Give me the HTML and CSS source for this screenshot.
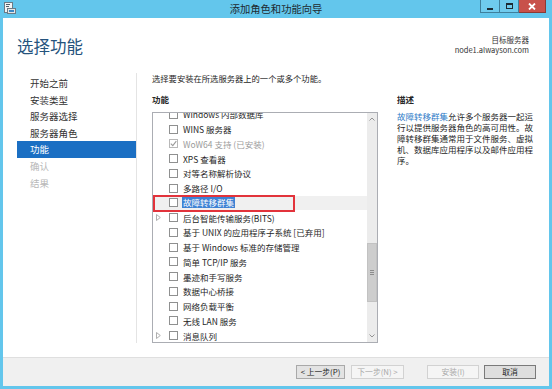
FILE: index.html
```html
<!DOCTYPE html>
<html lang="zh-CN">
<head>
<meta charset="utf-8">
<title>添加角色和功能向导</title>
<link rel="stylesheet" href="styles.css">
</head>
<body>
<div class="window">
  <div class="titlebar">
    <div class="tb-left">
      <svg class="app-icon" width="12" height="12" viewBox="0 0 12 12">
        <rect x="0.5" y="0.5" width="8" height="10" fill="#f4f4f4" stroke="#6b7b86"/>
        <rect x="2" y="2" width="4" height="1" fill="#51606b"/>
        <rect x="2" y="4" width="3" height="1" fill="#51606b"/>
        <rect x="3.5" y="6.5" width="8" height="5" fill="#e2e6e8" stroke="#6b7b86"/>
        <rect x="5" y="8" width="5" height="2" fill="#3b87c4"/>
      </svg>
    </div>
    <div class="title">添加角色和功能向导</div>
    <div class="caption-buttons">
      <div class="cbtn min"><span class="glyph-min"></span></div>
      <div class="cbtn max"><span class="glyph-max"></span></div>
      <div class="cbtn close">
        <svg width="8" height="7" viewBox="0 0 8 7"><path d="M1 0.5 L7 6.5 M7 0.5 L1 6.5" stroke="#fff" stroke-width="1.8"/></svg>
      </div>
    </div>
  </div>

  <div class="client">
    <header class="page-header">
      <h1>选择功能</h1>
      <div class="server">
        <div>目标服务器</div>
        <div>node1.alwayson.com</div>
      </div>
    </header>

    <div class="body">
      <nav class="steps">
        <div class="step">开始之前</div>
        <div class="step">安装类型</div>
        <div class="step">服务器选择</div>
        <div class="step">服务器角色</div>
        <div class="step active">功能</div>
        <div class="step disabled">确认</div>
        <div class="step disabled">结果</div>
      </nav>

      <main class="content">
        <p class="intro">选择要安装在所选服务器上的一个或多个功能。</p>
        <div class="columns">
          <section class="features">
            <div class="label">功能</div>
            <div class="listbox">
              <div class="list-viewport">
                <ul class="items">
                  <li class="item"><span class="exp"></span><span class="check"></span><span class="text">Windows 内部数据库</span></li>
                  <li class="item"><span class="exp"></span><span class="check"></span><span class="text">WINS 服务器</span></li>
                  <li class="item installed"><span class="exp"></span><span class="check checked"><svg width="7" height="7" viewBox="0 0 7 7"><path d="M0.8 3.6 L2.8 5.6 L6.3 1.2" fill="none" stroke="#9a9a9a" stroke-width="1.1"/></svg></span><span class="text">WoW64 支持 (已安装)</span></li>
                  <li class="item"><span class="exp"></span><span class="check"></span><span class="text">XPS 查看器</span></li>
                  <li class="item"><span class="exp"></span><span class="check"></span><span class="text">对等名称解析协议</span></li>
                  <li class="item"><span class="exp"></span><span class="check"></span><span class="text">多路径 I/O</span></li>
                  <li class="item selected"><span class="exp"></span><span class="check"></span><span class="text">故障转移群集</span><span class="annotation"></span></li>
                  <li class="item"><span class="exp"><svg width="5" height="7" viewBox="0 0 5 7"><path d="M0.5 0.5 L4.3 3.5 L0.5 6.5 Z" fill="none" stroke="#a6a6a6" stroke-width="0.9"/></svg></span><span class="check"></span><span class="text">后台智能传输服务(BITS)</span></li>
                  <li class="item"><span class="exp"></span><span class="check"></span><span class="text">基于 UNIX 的应用程序子系统 [已弃用]</span></li>
                  <li class="item"><span class="exp"></span><span class="check"></span><span class="text">基于 Windows 标准的存储管理</span></li>
                  <li class="item"><span class="exp"></span><span class="check"></span><span class="text">简单 TCP/IP 服务</span></li>
                  <li class="item"><span class="exp"></span><span class="check"></span><span class="text">墨迹和手写服务</span></li>
                  <li class="item"><span class="exp"></span><span class="check"></span><span class="text">数据中心桥接</span></li>
                  <li class="item"><span class="exp"></span><span class="check"></span><span class="text">网络负载平衡</span></li>
                  <li class="item"><span class="exp"></span><span class="check"></span><span class="text">无线 LAN 服务</span></li>
                  <li class="item"><span class="exp"><svg width="5" height="7" viewBox="0 0 5 7"><path d="M0.5 0.5 L4.3 3.5 L0.5 6.5 Z" fill="none" stroke="#a6a6a6" stroke-width="0.9"/></svg></span><span class="check"></span><span class="text">消息队列</span></li>
                </ul>
              </div>
              <div class="scrollbar">
                <div class="sb-arrow"><svg width="6" height="4" viewBox="0 0 6 4"><path d="M0.5 3.5 L3 1 L5.5 3.5" fill="none" stroke="#8a8a8a" stroke-width="0.9"/></svg></div>
                <div class="sb-track">
                  <div class="sb-thumb"><span class="grip"></span></div>
                </div>
                <div class="sb-arrow"><svg width="6" height="4" viewBox="0 0 6 4"><path d="M0.5 0.5 L3 3 L5.5 0.5" fill="none" stroke="#8a8a8a" stroke-width="0.9"/></svg></div>
              </div>
            </div>
          </section>

          <section class="desc">
            <div class="label">描述</div>
            <p class="desc-text"><span class="link">故障转移群集</span>允许多个服务器一起运<br>行以提供服务器角色的高可用性。故<br>障转移群集通常用于文件服务、虚拟<br>机、数据库应用程序以及邮件应用程<br>序。</p>
          </section>
        </div>
      </main>
    </div>

    <footer class="footer">
      <button class="btn prev">&lt; 上一步(P)</button>
      <button class="btn next" disabled>下一步(N) &gt;</button>
      <button class="btn install" disabled>安装(I)</button>
      <button class="btn cancel">取消</button>
    </footer>
  </div>
</div>
</body>
</html>
```

FILE: styles.css
```css
* { box-sizing: border-box; }

html, body {
  margin: 0;
  padding: 0;
  background: #63c6ec;
}

body {
  font-family: "Noto Sans CJK SC", "Noto Sans", sans-serif;
  color: #222;
  text-spacing-trim: space-all;
}

.window {
  width: 552px;
  height: 389px;
  background: #63c6ec;
  padding: 0 3px 3px 3px;
  display: flex;
  flex-direction: column;
}

/* ---------- title bar ---------- */
.titlebar {
  height: 18px;
  display: grid;
  grid-template-columns: 1fr auto 1fr;
  align-items: start;
}

.tb-left {
  padding: 2px 0 0 1px;
  display: flex;
}

.title {
  font-size: 10.3px;
  line-height: 17px;
  color: #1e2a30;
}

.caption-buttons {
  display: flex;
  justify-content: flex-end;
  margin-right: 3px;
}

.cbtn {
  height: 13px;
  display: flex;
  align-items: center;
  justify-content: center;
  border: 1px solid #3f7f9c;
  border-top: none;
}

.cbtn.min { width: 20px; background: #6fcbee; }
.cbtn.max { width: 19px; background: #6fcbee; border-left: none; }
.cbtn.close { width: 27px; background: #c8514a; border-color: #8a3a34; border-left: none; }

.glyph-min {
  width: 6px;
  height: 2px;
  background: #1d2a33;
  margin-top: 5px;
}

.glyph-max {
  width: 7px;
  height: 6px;
  border: 1px solid #1d2a33;
  border-top-width: 2px;
}

/* ---------- client ---------- */
.client {
  flex: 1;
  background: #fff;
  display: flex;
  flex-direction: column;
}

.page-header {
  height: 55px;
  display: flex;
  justify-content: space-between;
  padding: 0 20px 0 14px;
}

.page-header h1 {
  margin: 0;
  padding-top: 18px;
  font-size: 16.5px;
  line-height: 21px;
  font-weight: normal;
  color: #25537d;
}

.server {
  padding-top: 17px;
  text-align: right;
  font-size: 7.5px;
  line-height: 10px;
  color: #333;
}

.body {
  flex: 1;
  display: flex;
  padding-bottom: 14px;
}

/* ---------- steps nav ---------- */
.steps {
  width: 134px;
  padding: 2px 0 0 14px;
  border-right: 1px solid #e4e4e4;
}

.step {
  height: 16.6px;
  line-height: 16.6px;
  padding-left: 13px;
  font-size: 9.5px;
  color: #333;
}

.step.active {
  background: #1b6fc3;
  color: #fff;
}

.step.disabled {
  color: #b8b8b8;
}

/* ---------- main content ---------- */
.content {
  padding-left: 15px;
}

.intro {
  margin: 0;
  font-size: 8.3px;
  line-height: 11px;
  color: #262626;
}

.columns {
  display: flex;
  gap: 19px;
  margin-top: 10px;
}

.label {
  font-size: 8.5px;
  line-height: 11px;
  font-weight: bold;
  color: #262626;
}

.listbox {
  margin-top: 7px;
  width: 226px;
  height: 231px;
  border: 1px solid #abadb3;
  display: flex;
}

.list-viewport {
  flex: 1;
  overflow: hidden;
}

.items {
  margin: -6px 0 0 0;
  padding: 0;
  list-style: none;
}

.item {
  position: relative;
  height: 14.75px;
  display: flex;
  align-items: center;
  font-size: 8.5px;
  color: #262626;
  white-space: nowrap;
}

.exp {
  width: 16px;
  display: flex;
  align-items: center;
  padding-left: 3px;
}

.check {
  width: 9px;
  height: 9px;
  border: 1px solid #8f9090;
  background: #fff;
  margin-right: 5px;
  display: flex;
  align-items: center;
  justify-content: center;
  flex: none;
}

.check.checked {
  border-color: #b8b8b8;
}

.item.installed .text {
  color: #9a9a9a;
}

.item.selected {
  background: #f0f0f0;
}

.item.selected .text {
  background: #3d82d4;
  color: #fff;
  line-height: 11px;
  padding: 0 1px;
  margin-left: -1px;
}

.annotation {
  position: absolute;
  left: 0;
  top: -1px;
  width: 142px;
  height: 17px;
  border: 2px solid #e2333b;
}

/* scrollbar */
.scrollbar {
  width: 10px;
  background: #ececec;
  display: flex;
  flex-direction: column;
}

.sb-arrow {
  height: 12px;
  display: flex;
  align-items: center;
  justify-content: center;
}

.sb-track {
  flex: 1;
}

.sb-thumb {
  margin: 118px 0 0 0;
  height: 59px;
  background: #cdcdcd;
  border: 1px solid #c2c2c2;
  display: flex;
  align-items: center;
  justify-content: center;
}

.grip {
  width: 4px;
  height: 5px;
  border-top: 1px solid #8c8c8c;
  border-bottom: 1px solid #8c8c8c;
  position: relative;
}

.grip::after {
  content: "";
  position: absolute;
  left: 0;
  right: 0;
  top: 1px;
  height: 1px;
  background: #8c8c8c;
}

/* description */
.desc {
  width: 140px;
}

.desc-text {
  margin: 6px 0 0 0;
  font-size: 8.5px;
  line-height: 10.9px;
  color: #262626;
  white-space: nowrap;
}

.link {
  color: #2f7cc8;
}

/* ---------- footer ---------- */
.footer {
  height: 29px;
  background: #f0f0f0;
  border-top: 1px solid #dfdfdf;
  display: flex;
  justify-content: flex-end;
  align-items: flex-start;
  padding: 7px 13px 0 0;
}

.btn {
  height: 14px;
  padding: 0;
  font-family: inherit;
  font-size: 7.8px;
  line-height: 12px;
  color: #222;
  background: #e3e3e3;
  border: 1px solid #a9a9a9;
}

.btn.prev { width: 49px; }
.btn.next { width: 53px; margin-left: 6px; }
.btn.install { width: 52px; margin-left: 23px; }
.btn.cancel { width: 52px; margin-left: 5px; border-color: #7a7a7a; background: #dedede; }

.btn:disabled {
  background: #f5f5f5;
  border-color: #d2d2d2;
  color: #a8a8a8;
}
```
